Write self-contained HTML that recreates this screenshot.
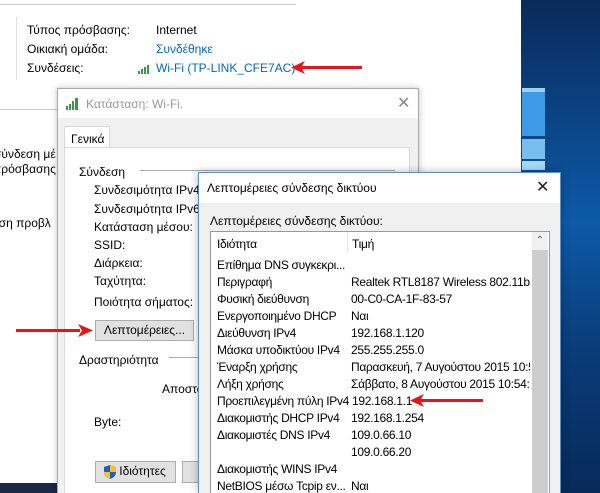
<!DOCTYPE html>
<html><head><meta charset="utf-8"><style>
*{margin:0;padding:0;box-sizing:border-box}
html,body{width:600px;height:493px;overflow:hidden}
body{position:relative;background:#fff;font-family:"Liberation Sans","DejaVu Sans",sans-serif;font-size:12px;color:#000}
.a{position:absolute;white-space:nowrap}
.desk{position:absolute;left:521px;top:0;width:79px;height:493px;background:linear-gradient(180deg,#0a2a5a 0%,#0b4a8e 30%,#0d5aa8 45%,#0a3d7a 70%,#072a5a 100%)}
.btn{position:absolute;background:#e1e1e1;border:1px solid #adadad;text-align:center;line-height:19px}
.arrow{position:absolute;height:3px;background:#e8141a}
.l .a{letter-spacing:-0.3px}
</style></head><body>
<div class="desk">
 <div class="a" style="left:1px;top:88px;width:23px;height:4px;background:#9fd0f4"></div>
 <div class="a" style="left:1px;top:92px;width:23px;height:44px;background:#3d9ae6"></div>
 <div class="a" style="left:1px;top:139px;width:23px;height:20px;background:#78bff0"></div>
 <div class="a" style="left:1px;top:161px;width:23px;height:9px;background:#a8d8f6"></div>
</div>
<div class="a" style="left:0;top:4px;width:296px;height:1px;background:#ccc"></div>
<div class="a" style="left:16px;top:17px;width:1px;height:63px;background:#ddd"></div>
<div class="a" style="left:0;top:109px;width:57px;height:1px;background:#ccc"></div>
<div class="a" style="left:27px;top:23px">Τύπος πρόσβασης:</div>
<div class="a" style="left:156px;top:23px">Internet</div>
<div class="a" style="left:27px;top:42px">Οικιακή ομάδα:</div>
<div class="a" style="left:156px;top:42px;color:#0066cc">Συνδέθηκε</div>
<div class="a" style="left:27px;top:61px">Συνδέσεις:</div>
<svg class="a" style="left:138px;top:64px" width="14" height="10"><rect x="0" y="7" width="2" height="3" fill="#3a9a4a"/><rect x="3" y="5" width="2" height="5" fill="#3a9a4a"/><rect x="6" y="3" width="2" height="7" fill="#3a9a4a"/><rect x="9" y="1" width="2" height="9" fill="#3a9a4a"/></svg>
<div class="a" style="left:156px;top:61px;color:#0066cc">Wi-Fi (TP-LINK_CFE7AC)</div>
<div class="arrow" style="left:300px;top:66px;width:62px"></div>
<svg class="a" style="left:291px;top:61px" width="14" height="13"><polygon points="0,6.5 14,0 10,6.5 14,13" fill="#e8141a"/></svg>
<div class="a" style="left:-6px;top:147px">σύνδεση μέ</div>
<div class="a" style="left:-7px;top:162px">πρόσβασης.</div>
<div class="a" style="left:-8px;top:216px">ηση προβλ</div>
<div class="a" style="left:0;top:483px;width:57px;height:10px;background:#1a2a44"></div>

<!-- status dialog -->
<div class="a" style="left:57px;top:88px;width:362px;height:405px;background:#f0f0f0;border:1px solid #aaa;border-bottom:none;box-shadow:0 0 6px rgba(0,0,0,.25);overflow:hidden">
 <div class="a" style="left:0;top:0;width:360px;height:29px;background:#fff"></div>
 <svg class="a" style="left:8px;top:9px" width="14" height="12"><rect x="0" y="8" width="2" height="4" fill="#3a9a4a"/><rect x="3" y="6" width="2" height="6" fill="#3a9a4a"/><rect x="6" y="3" width="2" height="9" fill="#3a9a4a"/><rect x="9" y="0" width="3" height="12" fill="#3a9a4a"/></svg>
 <div class="a" style="left:28px;top:8px;color:#999;font-size:12px">Κατάσταση: Wi-Fi.</div>
 <div class="a" style="left:339px;top:4px;color:#888;font-size:16px">✕</div>
 <div class="a" style="left:6px;top:37px;width:46px;height:22px;background:#fff;border:1px solid #d9d9d9;border-bottom:none;padding:5px 0 0 6px">Γενικά</div>
 <div class="a" style="left:6px;top:58px;width:346px;height:360px;background:#fff;border:1px solid #d9d9d9"></div>
 <div class="a" style="left:21px;top:76px">Σύνδεση</div>
 <div class="a" style="left:82px;top:81px;width:255px;height:1px;background:#aaa"></div>
 <div class="a" style="left:36px;top:94px">Συνδεσιμότητα IPv4:</div>
 <div class="a" style="left:36px;top:113px">Συνδεσιμότητα IPv6:</div>
 <div class="a" style="left:36px;top:131px">Κατάσταση μέσου:</div>
 <div class="a" style="left:36px;top:149px">SSID:</div>
 <div class="a" style="left:36px;top:167px">Διάρκεια:</div>
 <div class="a" style="left:36px;top:185px">Ταχύτητα:</div>
 <div class="a" style="left:36px;top:206px">Ποιότητα σήματος:</div>
 <div class="btn" style="left:37px;top:231px;width:99px;height:21px">Λεπτομέρειες...</div>
 <div class="a" style="left:21px;top:264px">Δραστηριότητα</div>
 <div class="a" style="left:111px;top:268px;width:40px;height:1px;background:#aaa"></div>
 <div class="a" style="left:104px;top:293px">Αποστο</div>
 <div class="a" style="left:36px;top:326px">Byte:</div>
 <div class="btn" style="left:37px;top:372px;width:81px;height:22px;padding-left:14px">Ιδιότητες</div>
 <svg class="a" style="left:46px;top:376px" width="12" height="14"><path d="M6 0 L12 2 L12 7 Q12 12 6 14 Q0 12 0 7 L0 2 Z" fill="#1f5fb8"/><path d="M6 0 L12 2 L12 7 L6 7 Z M0 7 L6 7 L6 14 Q0 12 0 7 Z" fill="#f3c232"/></svg>
 <div class="btn" style="left:124px;top:372px;width:30px;height:22px"></div>
</div>

<div class="arrow" style="left:16px;top:329px;width:64px"></div>
<svg class="a" style="left:78px;top:324px" width="15" height="13"><polygon points="15,6.5 0,0 4,6.5 0,13" fill="#e8141a"/></svg>

<!-- details dialog -->
<div class="a" style="left:198px;top:172px;width:363px;height:321px;background:#f0f0f0;border:1px solid #5a8fc8;border-bottom:none;box-shadow:0 0 8px rgba(0,0,0,.3);overflow:hidden">
 <div class="a" style="left:0;top:0;width:361px;height:30px;background:#fff"></div>
 <div class="a" style="left:8px;top:8px">Λεπτομέρειες σύνδεσης δικτύου</div>
 <div class="a" style="left:337px;top:4px;font-size:16px;color:#222">✕</div>
 <div class="a" style="left:11px;top:41px">Λεπτομέρειες σύνδεσης δικτύου:</div>
 <div class="a" style="left:11px;top:58px;width:340px;height:280px;background:#fff;border:1px solid #999"></div>
 <div class="a" style="left:148px;top:59px;width:1px;height:21px;background:#e5e5e5"></div>
 <div class="a" style="left:333px;top:59px;width:16px;height:270px;background:#cdcdcd"></div>
 <div class="a" style="left:333px;top:59px;width:16px;height:18px;background:#f0f0f0;text-align:center;font-size:10px;color:#555;line-height:18px">⌃</div>
</div>
<div class="l">
<div class="a" style="left:217px;top:237px">Ιδιότητα</div>
<div class="a" style="left:352px;top:237px">Τιμή</div>
</div>
<div class="l" style="position:absolute;left:0;top:0;width:530px;height:493px;overflow:hidden">
<div class="a" style="left:217px;top:258px">Επίθημα DNS συγκεκρι...</div>
<div class="a" style="left:217px;top:275px">Περιγραφή</div><div class="a" style="left:351px;top:275px">Realtek RTL8187 Wireless 802.11b/g</div>
<div class="a" style="left:217px;top:292px">Φυσική διεύθυνση</div><div class="a" style="left:351px;top:292px">00-C0-CA-1F-83-57</div>
<div class="a" style="left:217px;top:309px">Ενεργοποιημένο DHCP</div><div class="a" style="left:351px;top:309px">Ναι</div>
<div class="a" style="left:217px;top:326px">Διεύθυνση IPv4</div><div class="a" style="left:351px;top:326px">192.168.1.120</div>
<div class="a" style="left:217px;top:343px">Μάσκα υποδικτύου IPv4</div><div class="a" style="left:351px;top:343px">255.255.255.0</div>
<div class="a" style="left:217px;top:360px">Έναρξη χρήσης</div><div class="a" style="left:351px;top:360px">Παρασκευή, 7 Αυγούστου 2015 10:54</div>
<div class="a" style="left:217px;top:377px">Λήξη χρήσης</div><div class="a" style="left:351px;top:377px">Σάββατο, 8 Αυγούστου 2015 10:54:2</div>
<div class="a" style="left:217px;top:394px">Προεπιλεγμένη πύλη IPv4</div><div class="a" style="left:352px;top:394px">192.168.1.1</div>
<div class="a" style="left:217px;top:411px">Διακομιστής DHCP IPv4</div><div class="a" style="left:351px;top:411px">192.168.1.254</div>
<div class="a" style="left:217px;top:428px">Διακομιστές DNS IPv4</div><div class="a" style="left:351px;top:428px">109.0.66.10</div>
<div class="a" style="left:351px;top:445px">109.0.66.20</div>
<div class="a" style="left:217px;top:462px">Διακομιστής WINS IPv4</div>
<div class="a" style="left:217px;top:479px">NetBIOS μέσω Tcpip εν...</div><div class="a" style="left:351px;top:479px">Ναι</div>
</div>
<div class="arrow" style="left:420px;top:399px;width:63px"></div>
<svg class="a" style="left:410px;top:394px" width="14" height="13"><polygon points="0,6.5 14,0 10,6.5 14,13" fill="#e8141a"/></svg>
</body></html>
